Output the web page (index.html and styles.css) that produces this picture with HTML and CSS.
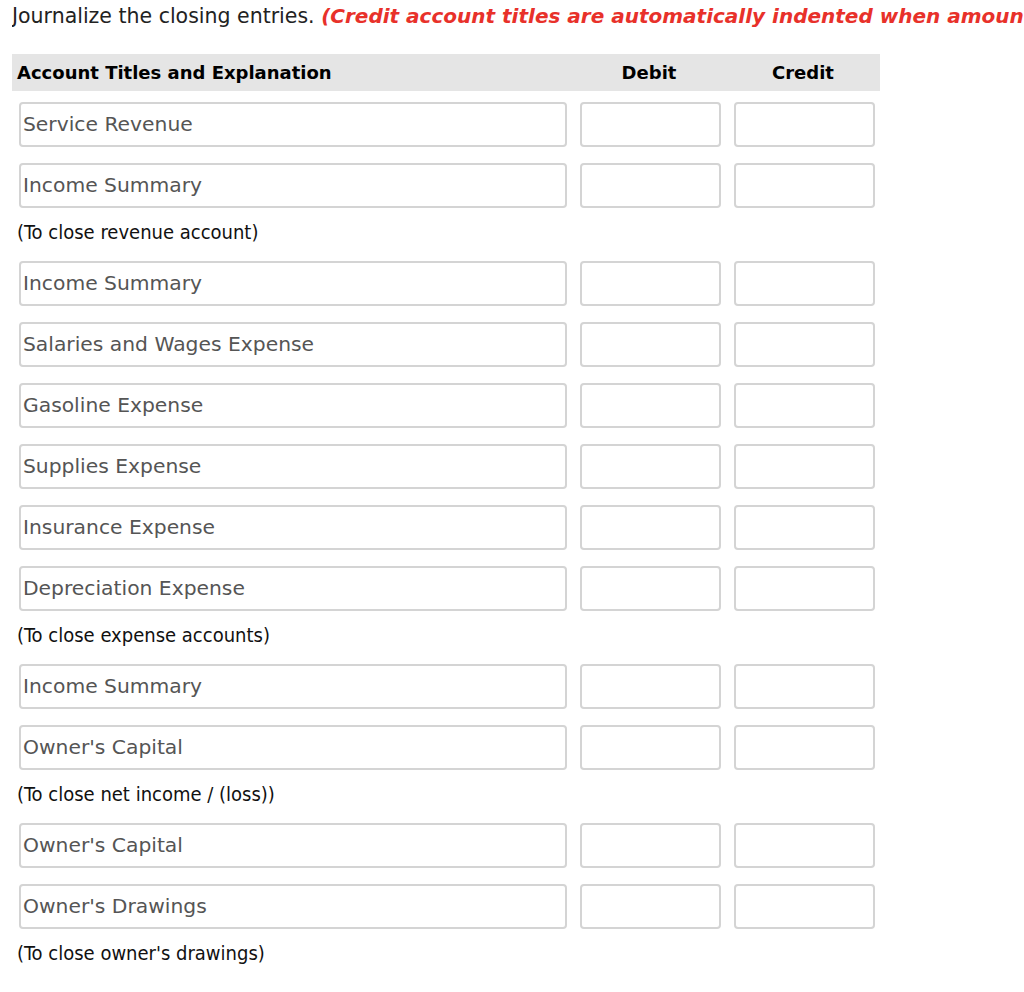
FILE: index.html
```html
<!DOCTYPE html>
<html>
<head>
<meta charset="utf-8">
<link rel="stylesheet" href="styles.css">
</head>
<body>
<div class="page">
  <p class="prompt">Journalize the closing entries. <em class="note">(Credit account titles are automatically indented when amount is entered. Do not indent manually.)</em></p>
  <div class="journal">
    <div class="head">
      <div class="h-title">Account Titles and Explanation</div>
      <div class="h-num">Debit</div>
      <div class="h-num">Credit</div>
    </div>

    <div class="row"><input class="acct" value="Service Revenue"><input class="amt"><input class="amt"></div>
    <div class="row"><input class="acct" value="Income Summary"><input class="amt"><input class="amt"></div>
    <div class="expl">(To close revenue account)</div>

    <div class="row"><input class="acct" value="Income Summary"><input class="amt"><input class="amt"></div>
    <div class="row"><input class="acct" value="Salaries and Wages Expense"><input class="amt"><input class="amt"></div>
    <div class="row"><input class="acct" value="Gasoline Expense"><input class="amt"><input class="amt"></div>
    <div class="row"><input class="acct" value="Supplies Expense"><input class="amt"><input class="amt"></div>
    <div class="row"><input class="acct" value="Insurance Expense"><input class="amt"><input class="amt"></div>
    <div class="row"><input class="acct" value="Depreciation Expense"><input class="amt"><input class="amt"></div>
    <div class="expl">(To close expense accounts)</div>

    <div class="row"><input class="acct" value="Income Summary"><input class="amt"><input class="amt"></div>
    <div class="row"><input class="acct" value="Owner's Capital"><input class="amt"><input class="amt"></div>
    <div class="expl">(To close net income / (loss))</div>

    <div class="row"><input class="acct" value="Owner's Capital"><input class="amt"><input class="amt"></div>
    <div class="row"><input class="acct" value="Owner's Drawings"><input class="amt"><input class="amt"></div>
    <div class="expl">(To close owner's drawings)</div>
  </div>
</div>
</body>
</html>
```

FILE: styles.css
```css
html, body {
  margin: 0;
  padding: 0;
  background: #fff;
  overflow: hidden;
}
.page {
  padding: 0 0 0 12px;
  font-family: "DejaVu Sans", Verdana, sans-serif;
}
.prompt {
  margin: 0;
  padding-top: 5px;
  height: 49px;
  font-size: 20.5px;
  line-height: 22px;
  color: #222;
  white-space: nowrap;
  overflow: hidden;
}
.note {
  color: #e8312a;
  font-weight: bold;
  font-style: italic;
  font-size: 20px;
}
.journal {
  width: 868px;
}
.head {
  display: grid;
  grid-template-columns: 560px 154px 154px;
  height: 37px;
  align-items: center;
  background: #e5e5e5;
  margin-bottom: 11px;
  font-weight: bold;
  font-size: 18px;
  color: #000;
}
.h-title {
  padding-left: 5px;
}
.h-num {
  text-align: center;
}
.row {
  display: grid;
  grid-template-columns: 548px 141px 141px;
  column-gap: 13px;
  padding-left: 7px;
  margin-bottom: 16px;
}
.row input {
  box-sizing: border-box;
  height: 45px;
  margin: 0;
  border: 2px solid #d4d4d4;
  border-radius: 4px;
  background: #fff;
  font-family: "DejaVu Sans", Verdana, sans-serif;
  font-size: 20.3px;
  color: #555;
  padding: 0 0 2px 2px;
  outline: none;
}
.expl {
  height: 37px;
  padding-left: 5px;
  font-family: "DejaVu Sans Condensed", "DejaVu Sans", sans-serif;
  font-size: 20px;
  line-height: 17px;
  color: #111;
}
```
